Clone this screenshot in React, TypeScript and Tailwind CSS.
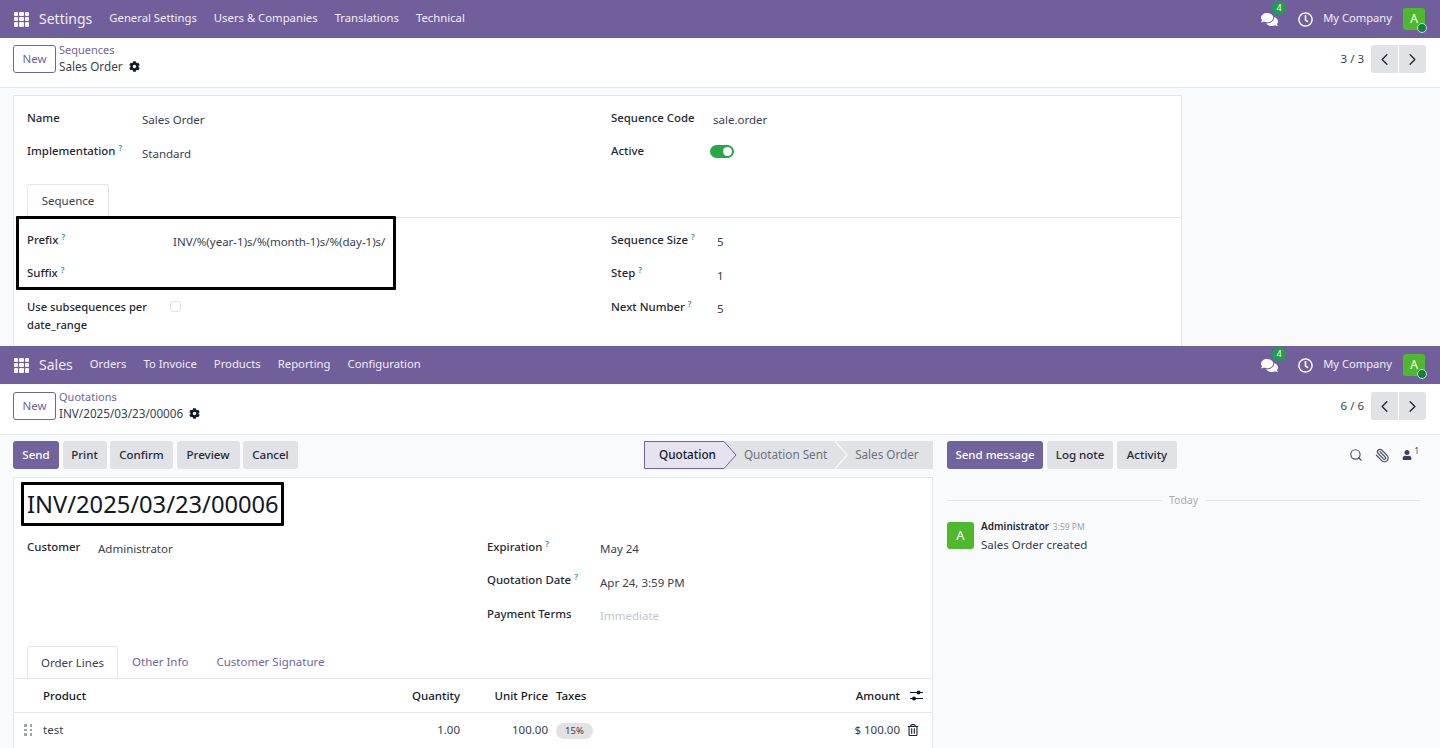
import { ChevronLeft, ChevronRight, Paperclip, Search } from "lucide-react";
import { FaCog, FaComments, FaRegClock, FaRegTrashAlt, FaUser } from "react-icons/fa";

const font = "font-['Noto_Sans',sans-serif]";

function GridIcon() {
  return (
    <div className="grid h-[15px] w-[15px] grid-cols-3 gap-[1px]">
      {[0, 1, 2, 3, 4, 5, 6, 7, 8].map((i) => (
        <span key={i} className="rounded-[1px] bg-white/95" />
      ))}
    </div>
  );
}

function Navbar({ app, menus }: { app: string; menus: string[] }) {
  return (
    <div className="flex h-[38px] items-center bg-[#705f9b] pl-[14px] pr-[15px] text-[#f0edf6]">
      <GridIcon />
      <span className="ml-[10px] text-[14px] leading-none">{app}</span>
      <div className="-mt-[2px] ml-[17px] flex gap-[17px] text-[11.3px]">
        {menus.map((m) => (
          <span key={m}>{m}</span>
        ))}
      </div>
      <div className="relative ml-auto flex items-center">
        <FaComments className="text-[17px] text-white" />
        <span className="absolute left-[11px] top-[-7px] flex h-[14px] w-[14px] items-center justify-center rounded-full bg-[#1f9d55] text-[9px] text-white">
          4
        </span>
        <FaRegClock className="ml-[20px] text-[15px] text-white" />
        <span className="-mt-[2px] ml-[10px] text-[11.2px]">My Company</span>
        <div className="relative ml-[11px] flex h-[22px] w-[22px] items-center justify-center rounded-[3px] bg-[#4fb82d] text-[12px] text-white">
          A
          <span className="absolute bottom-[-3px] right-[-2px] h-[10px] w-[10px] rounded-full border border-[#b9e6d0] bg-[#14803c]" />
        </div>
      </div>
    </div>
  );
}

function ControlPanel({ crumb, title, pager, box }: { crumb: string; title: string; pager: string; box: string }) {
  return (
    <div className={`flex items-start border-b border-[#e4e6ea] bg-white pl-[13px] pr-[14px] ${box}`}>
      <button className="h-[28px] w-[43px] rounded-[3px] border border-[#71639e] text-[11.5px] text-[#71639e]">New</button>
      <div className="-mt-[3px] ml-[3px] flex flex-col">
        <span className="text-[11px] leading-[16px] text-[#71639e]">{crumb}</span>
        <span className="flex items-center gap-[6px] text-[11.7px] leading-[16px] text-[#374151]">
          {title}
          <FaCog className="text-[11px] text-[#111827]" />
        </span>
      </div>
      <span className="ml-auto mr-[7px] mt-[5px] text-[11.5px] text-[#374151]">{pager}</span>
      <div className="flex h-[28px] gap-[1px]">
        <span className="flex w-[27px] items-center justify-center rounded-l-[3px] bg-[#e0e2e6]">
          <ChevronLeft size={19} strokeWidth={1.7} className="text-[#1f2937]" />
        </span>
        <span className="flex w-[27px] items-center justify-center rounded-r-[3px] bg-[#e0e2e6]">
          <ChevronRight size={19} strokeWidth={1.7} className="text-[#1f2937]" />
        </span>
      </div>
    </div>
  );
}

function Help() {
  return <sup className="ml-[3px] text-[8px] font-semibold text-[#1b8fb0]">?</sup>;
}

function Field({
  label,
  help,
  value,
  labelWidth,
}: {
  label: string;
  help?: boolean;
  value?: string;
  labelWidth: string;
}) {
  return (
    <div className="flex h-[33.5px] items-center">
      <div className={`${labelWidth} -mt-[5px] text-[11.4px] font-medium text-[#1f2937]`}>
        {label}
        {help && <Help />}
      </div>
      {value && <div className="text-[11.5px] text-[#374151]">{value}</div>}
    </div>
  );
}

function SettingsScreen() {
  return (
    <div className="h-[346px] overflow-hidden bg-[#f9fafb]">
      <Navbar app="Settings" menus={["General Settings", "Users & Companies", "Translations", "Technical"]} />
      <div className="h-[1px] bg-white" />
      <ControlPanel crumb="Sequences" title="Sales Order" pager="3 / 3" box="h-[49px] pt-[6px]" />
      <div className="pl-[13px] pt-[7px]">
        <div className="relative h-[300px] w-[1169px] border border-[#e4e6ea] bg-white">
          <div className="flex pl-[13px] pt-[7px]">
            <div className="w-[584px]">
              <Field label="Name" value="Sales Order" labelWidth="w-[115px]" />
              <Field label="Implementation" help value="Standard" labelWidth="w-[115px]" />
            </div>
            <div>
              <Field label="Sequence Code" value="sale.order" labelWidth="w-[102px]" />
              <div className="flex h-[33.5px] items-center">
                <div className="-mt-[5px] w-[99px] text-[11.4px] font-medium text-[#1f2937]">Active</div>
                <span className="-mt-[3px] flex h-[13px] w-[24px] items-center justify-end rounded-full bg-[#28a745] pr-[2px]">
                  <span className="h-[9px] w-[9px] rounded-full bg-white" />
                </span>
              </div>
            </div>
          </div>
          <div className="mt-[14px] h-[34px] border-b border-[#e4e6ea] pl-[13px]">
            <div className="flex h-[33px] w-[82px] items-center justify-center rounded-t-[3px] border border-b-0 border-[#e4e6ea] bg-white text-[11.5px] text-[#374151]">
              Sequence
            </div>
          </div>
          <div className="flex pl-[13px] pt-[7px]">
            <div className="w-[584px]">
              <Field label="Prefix" help value="INV/%(year-1)s/%(month-1)s/%(day-1)s/" labelWidth="w-[146px]" />
              <Field label="Suffix" help labelWidth="w-[146px]" />
              <div className="mt-[6px] flex">
                <div className="w-[143px] text-[11.2px] font-medium leading-[18px] text-[#1f2937]">
                  Use subsequences per
                  <br />
                  date_range
                </div>
                <span className="mt-[3px] h-[11px] w-[11px] rounded-[3px] border border-[#dfe1e5] bg-white" />
              </div>
            </div>
            <div>
              <Field label="Sequence Size" help value="5" labelWidth="w-[106px]" />
              <Field label="Step" help value="1" labelWidth="w-[106px]" />
              <Field label="Next Number" help value="5" labelWidth="w-[106px]" />
            </div>
          </div>
          {/* annotation box drawn over the screenshot */}
          <div className="absolute left-[2px] top-[119.5px] h-[74px] w-[380px] rounded-[1px] border-[3px] border-black" />
        </div>
      </div>
    </div>
  );
}

function Statusbar() {
  return (
    <div className="relative flex h-[28px] w-[289px] items-center text-[11.7px]">
      <svg className="absolute inset-0" width="289" height="28" viewBox="0 0 289 28">
        <rect width="289" height="28" fill="#e0e2e6" />
        <path d="M0.5 0.5H80L92 14L80 27.5H0.5Z" fill="#e6e2ef" stroke="#71639e" />
        <path d="M191 0L203 14L191 28" fill="none" stroke="#f9fafb" strokeWidth="1.2" />
      </svg>
      <span className="relative ml-[15px] font-medium text-[#111827]">Quotation</span>
      <span className="relative ml-[28px] text-[#6b7280]">Quotation Sent</span>
      <span className="relative ml-[28px] text-[#6b7280]">Sales Order</span>
    </div>
  );
}

function ActionButton({ label, width, primary }: { label: string; width: string; primary?: boolean }) {
  return (
    <button
      className={`h-[28px] rounded-[3px] text-[11.5px] font-medium ${width} ${
        primary ? "bg-[#71639e] text-white" : "bg-[#e0e2e6] text-[#1f2937]"
      }`}
    >
      {label}
    </button>
  );
}

function SlidersIcon() {
  return (
    <svg width="13" height="11" viewBox="0 0 13 11" className="text-[#111827]">
      <path d="M0 2.5H13M0 8.5H13" stroke="currentColor" strokeWidth="1" />
      <circle cx="8.5" cy="2.5" r="2" fill="currentColor" />
      <circle cx="4" cy="8.5" r="2" fill="currentColor" />
    </svg>
  );
}

function SalesForm() {
  return (
    <div className="w-[933px] shrink-0 pl-[13px] pt-[6px]">
      <div className="flex h-[28px] justify-between">
        <div className="flex gap-[3.5px]">
          <ActionButton label="Send" width="w-[46px]" primary />
          <ActionButton label="Print" width="w-[44px]" />
          <ActionButton label="Confirm" width="w-[63px]" />
          <ActionButton label="Preview" width="w-[63px]" />
          <ActionButton label="Cancel" width="w-[55px]" />
        </div>
        <Statusbar />
      </div>
      <div className="relative mt-[8px] h-[280px] w-[920px] border border-[#e4e6ea] bg-white">
        <div className="pl-[13px] pt-[11px] text-[23.7px] leading-[30px] text-[#111827]">INV/2025/03/23/00006</div>
        <div className="absolute left-[7px] top-[4px] h-[44px] w-[263px] rounded-[1px] border-[3px] border-black" />
        <div className="mt-[13px] flex pl-[13px]">
          <div className="w-[460px]">
            <Field label="Customer" value="Administrator" labelWidth="w-[71px]" />
          </div>
          <div>
            <Field label="Expiration" help value="May 24" labelWidth="w-[113px]" />
            <Field label="Quotation Date" help value="Apr 24, 3:59 PM" labelWidth="w-[113px]" />
            <div className="flex h-[33.5px] items-center">
              <div className="-mt-[5px] w-[113px] text-[11.4px] font-medium text-[#1f2937]">Payment Terms</div>
              <div className="text-[11.5px] text-[#c3c6cc]">Immediate</div>
            </div>
          </div>
        </div>
        <div className="mt-[13.5px] flex h-[33px] items-stretch border-b border-[#e4e6ea] pl-[13px] text-[11.5px]">
          <div className="flex w-[91px] items-center justify-center rounded-t-[3px] border border-b-0 border-[#e4e6ea] bg-white text-[#374151]">
            Order Lines
          </div>
          <div className="ml-[14px] flex items-center text-[#71639e]">Other Info</div>
          <div className="ml-[28px] flex items-center text-[#71639e]">Customer Signature</div>
        </div>
        <div className="flex h-[34px] items-center border-b border-[#e4e6ea] text-[11.5px] font-medium text-[#111827]">
          <span className="ml-[29px] w-[340px]">Product</span>
          <span className="w-[77px] text-right">Quantity</span>
          <span className="w-[88px] text-right">Unit Price</span>
          <span className="ml-[8px] w-[260px]">Taxes</span>
          <span className="w-[84px] text-right">Amount</span>
          <span className="ml-[10px]">
            <SlidersIcon />
          </span>
        </div>
        <div className="flex h-[34px] items-center text-[11.5px] text-[#374151]">
          <span className="ml-[10px] grid w-[19px] grid-cols-2 gap-[2px] pr-[10px]">
            {[0, 1, 2, 3, 4, 5].map((i) => (
              <span key={i} className="h-[2.5px] w-[2.5px] bg-[#9ca3af]" />
            ))}
          </span>
          <span className="w-[340px]">test</span>
          <span className="w-[77px] text-right">1.00</span>
          <span className="w-[88px] text-right">100.00</span>
          <span className="ml-[8px] w-[260px]">
            <span className="inline-flex h-[16px] w-[37px] items-center justify-center rounded-full bg-[#e5e0e2] text-[9.5px]">
              15%
            </span>
          </span>
          <span className="w-[84px] text-right">$ 100.00</span>
          <FaRegTrashAlt className="ml-[7px] text-[12px] text-[#1f2937]" />
        </div>
      </div>
    </div>
  );
}

function Chatter() {
  return (
    <div className="flex-1 pl-[14px] pr-[20px] pt-[6px]">
      <div className="flex h-[28px] items-center gap-[4px]">
        <ActionButton label="Send message" width="w-[96px]" primary />
        <ActionButton label="Log note" width="w-[66px]" />
        <ActionButton label="Activity" width="w-[60px]" />
        <div className="ml-auto flex items-center pr-[1px] text-[#4b5563]">
          <Search size={14} />
          <Paperclip size={15} className="ml-[12px] -scale-x-100" />
          <FaUser className="ml-[12px] text-[10px] text-[#3f3a6b]" />
          <sup className="ml-[2px] text-[8px] text-[#374151]">1</sup>
        </div>
      </div>
      <div className="mt-[24px] flex items-center gap-[7px] text-[10.5px] text-[#a8acb3]">
        <span className="h-[1px] flex-1 bg-[#e4e6ea]" />
        Today
        <span className="h-[1px] flex-1 bg-[#e4e6ea]" />
      </div>
      <div className="mt-[13px] flex">
        <div className="flex h-[27px] w-[27px] items-center justify-center rounded-[3px] bg-[#4fb82d] text-[13px] text-white">
          A
        </div>
        <div className="-mt-[2px] ml-[7px]">
          <div className="text-[10px] font-semibold leading-[13px] text-[#1f2937]">
            Administrator <span className="ml-[1px] text-[8.5px] font-normal text-[#9ca3af]">3:59 PM</span>
          </div>
          <div className="mt-[4px] text-[11.5px] leading-[15px] text-[#374151]">Sales Order created</div>
        </div>
      </div>
    </div>
  );
}

function SalesScreen() {
  return (
    <div className="flex-1 overflow-hidden bg-[#f9fafb]">
      <Navbar app="Sales" menus={["Orders", "To Invoice", "Products", "Reporting", "Configuration"]} />
      <ControlPanel crumb="Quotations" title="INV/2025/03/23/00006" pager="6 / 6" box="h-[50px] mt-[1px] pt-[7px]" />
      <div className="flex">
        <SalesForm />
        <Chatter />
      </div>
    </div>
  );
}

export default function App() {
  return (
    <div className={`flex h-[748px] w-[1440px] flex-col overflow-hidden ${font}`}>
      <SettingsScreen />
      <SalesScreen />
    </div>
  );
}
